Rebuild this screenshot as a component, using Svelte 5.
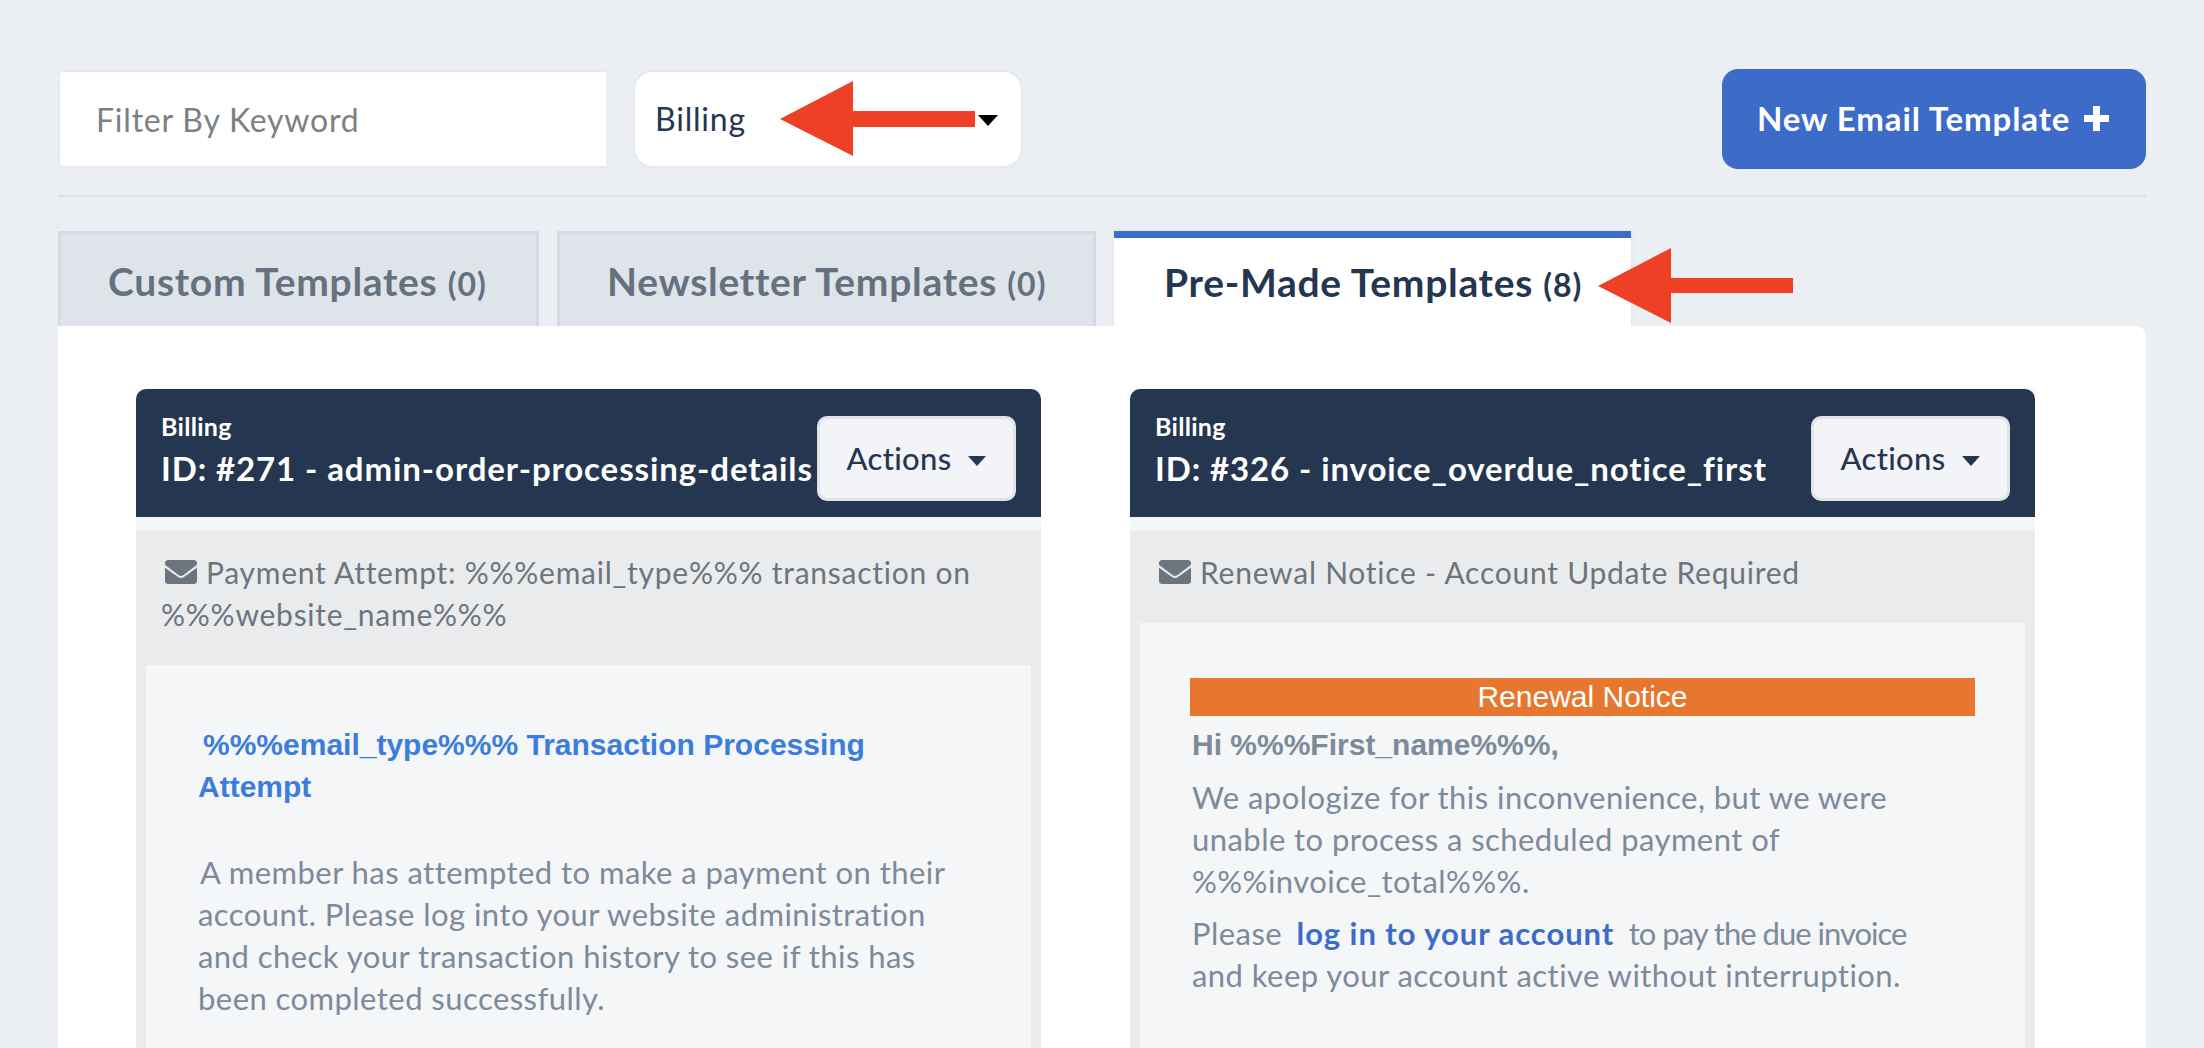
<script>
  const envelope = "M502.3 190.8c3.9-3.1 9.7-.2 9.7 4.7V400c0 26.5-21.5 48-48 48H48c-26.5 0-48-21.5-48-48V195.6c0-5 5.7-7.8 9.7-4.7 22.4 17.4 52.1 39.5 154.1 113.6 21.1 15.4 56.7 47.8 92.2 47.6 35.7.3 72-32.8 92.3-47.6 102-74.1 131.6-96.3 154-113.7zM256 320c23.2.4 56.6-29.2 73.4-41.4 132.7-96.3 142.8-104.7 173.4-128.7 5.8-4.5 9.2-11.5 9.2-18.9v-19c0-26.5-21.5-48-48-48H48C21.5 64 0 85.5 0 112v19c0 7.4 3.4 14.3 9.2 18.9 30.6 23.9 40.7 32.4 173.4 128.7 16.8 12.2 50.2 41.8 73.4 41.4z";
</script>

<div class="page">
  <div class="toolbar">
    <input class="filter" placeholder="Filter By Keyword" />
    <div class="select">Billing<span class="select-arrow"></span></div>
    <button class="new-btn">New Email Template <span class="plus"></span></button>
  </div>

  <div class="tabs">
    <div class="tab tab-one">Custom Templates <small>(0)</small></div>
    <div class="tab tab-two">Newsletter Templates <small>(0)</small></div>
    <div class="tab active">Pre-Made Templates <small>(8)</small></div>
  </div>

  <div class="panel">
    <div class="card">
      <div class="card-head">
        <div class="titles">
          <div class="cat">Billing</div>
          <div class="name">ID: #271 - admin-order-processing-details</div>
        </div>
        <button class="actions">Actions<span class="caret"></span></button>
      </div>
      <div class="card-body">
        <div class="subject">
          <svg viewBox="0 0 512 512"><path d={envelope} /></svg>Payment Attempt: %%%email_type%%% transaction on<br />%%%website_name%%%
        </div>
        <div class="mail">
          <h3 class="mail-title"><span class="indent"></span>%%%email_type%%% Transaction Processing<br />Attempt</h3>
          <p class="para-first"><span class="indent-small"></span>A member has attempted to make a payment on their<br />account. Please log into your website administration<br />and check your transaction history to see if this has<br />been completed successfully.</p>
        </div>
      </div>
    </div>

    <div class="card">
      <div class="card-head">
        <div class="titles">
          <div class="cat">Billing</div>
          <div class="name">ID: #326 - invoice_overdue_notice_first</div>
        </div>
        <button class="actions">Actions<span class="caret"></span></button>
      </div>
      <div class="card-body">
        <div class="subject one-line">
          <svg viewBox="0 0 512 512"><path d={envelope} /></svg>Renewal Notice - Account Update Required
        </div>
        <div class="mail mail-notice">
          <div class="banner">Renewal Notice</div>
          <div class="hi">Hi %%%First_name%%%,</div>
          <p class="para">We apologize for this inconvenience, but we were<br />unable to process a scheduled payment of<br />%%%invoice_total%%%.</p>
          <p class="para para-last">Please <a href="#top">log in to your account</a> <span class="tight">to pay the due invoice</span><br />and keep your account active without interruption.</p>
        </div>
      </div>
    </div>
  </div>

  <svg class="arrow arrow-one" viewBox="0 0 195 75"><path d="M0 38 73 0V30H195V46H73V75Z" /></svg>
  <svg class="arrow arrow-two" viewBox="0 0 195 75"><path d="M0 38 73 0V30H195V45H73V75Z" /></svg>
</div>

<style>
  :global(body) {
    margin: 0;
    background: #ebeef3;
  }
  .page {
    position: relative;
    height: 1048px;
    overflow: hidden;
    padding: 69px 58px 0;
    box-sizing: border-box;
    font-family: Lato, "Noto Sans", sans-serif;
    font-size: 30px;
    color: #253650;
  }
  .toolbar {
    display: flex;
    align-items: center;
    height: 100px;
    padding-bottom: 26px;
    border-bottom: 2px solid #dcdfe3;
    font-size: 32px;
    letter-spacing: 0.8px;
  }
  .filter {
    width: 548px;
    height: 98px;
    box-sizing: border-box;
    padding: 0 36px;
    border: 2px solid #e6e8ec;
    border-right: none;
    border-radius: 6px 0 0 6px;
    background: #fff;
    font: inherit;
    letter-spacing: inherit;
    outline: none;
  }
  .filter::placeholder {
    color: #7c7f83;
    opacity: 1;
  }
  .select {
    position: relative;
    width: 390px;
    height: 98px;
    margin-left: 27px;
    box-sizing: border-box;
    padding-left: 20px;
    border: 2px solid #e6e8ec;
    border-radius: 20px;
    background: #fff;
    line-height: 94px;
  }
  .select-arrow {
    position: absolute;
    right: 23px;
    top: 43px;
    border-left: 10px solid transparent;
    border-right: 10px solid transparent;
    border-top: 11px solid #000;
  }
  .new-btn {
    display: flex;
    align-items: center;
    gap: 14px;
    width: 424px;
    height: 100px;
    margin-left: auto;
    padding: 0 0 2px 35px;
    border: none;
    border-radius: 16px;
    background: #3c6bc8;
    color: #fff;
    font: inherit;
    font-size: 33px;
    font-weight: 700;
    letter-spacing: 0.9px;
  }
  .plus {
    position: relative;
    width: 25px;
    height: 25px;
    background:
      linear-gradient(#fff, #fff) center / 100% 7px no-repeat,
      linear-gradient(#fff, #fff) center / 7px 100% no-repeat;
    border-radius: 3px;
  }
  .tabs {
    display: flex;
    gap: 18px;
    margin-top: 34px;
    height: 95px;
  }
  .tab {
    box-sizing: border-box;
    height: 95px;
    padding-left: 47px;
    border: 3px solid #d3dbe6;
    border-bottom: none;
    background: #dfe4eb;
    color: #667180;
    font-size: 39px;
    font-weight: 700;
    letter-spacing: 0.7px;
    line-height: 94px;
    white-space: nowrap;
  }
  .tab small {
    font-size: 32px;
    letter-spacing: 1px;
  }
  .tab-one {
    width: 481px;
  }
  .tab-two {
    width: 539px;
  }
  .active {
    width: 517px;
    padding-left: 50px;
    border: none;
    border-top: 7px solid #3c6bc8;
    background: #fff;
    color: #253650;
    line-height: 88px;
    box-shadow: 0 0 4px rgba(0, 0, 0, 0.08);
  }
  .panel {
    position: relative;
    display: grid;
    grid-template-columns: minmax(0, 1fr) minmax(0, 1fr);
    gap: 89px;
    align-items: start;
    height: 800px;
    padding: 63px 111px 0 78px;
    border-radius: 0 10px 0 0;
    background: #fff;
  }
  .card {
    background: #f5f6f8;
  }
  .card-head {
    display: flex;
    align-items: center;
    justify-content: space-between;
    height: 128px;
    padding: 0 25px;
    border-radius: 10px 10px 0 0;
    background: #253650;
    color: #fff;
  }
  .titles {
    min-width: 0;
    margin-top: -4px;
  }
  .cat {
    font-size: 25px;
    font-weight: 700;
    letter-spacing: 0.3px;
    line-height: 34px;
  }
  .name {
    font-size: 33px;
    font-weight: 700;
    letter-spacing: 0.9px;
    line-height: 50px;
    white-space: nowrap;
  }
  .actions {
    flex: none;
    width: 199px;
    height: 85px;
    margin-top: 11px;
    box-sizing: border-box;
    padding: 0 0 2px;
    border: 3px solid #e1e3e8;
    border-radius: 10px;
    background: #f3f4f8;
    color: #253650;
    font: inherit;
    font-size: 31px;
    font-weight: 500;
    letter-spacing: 0.3px;
  }
  .caret {
    display: inline-block;
    margin-left: 17px;
    vertical-align: 4px;
    border-left: 9px solid transparent;
    border-right: 9px solid transparent;
    border-top: 10px solid #253650;
  }
  .card-body {
    margin-top: 14px;
    background: #eaebed;
  }
  .subject {
    box-sizing: border-box;
    height: 134px;
    padding: 20px 25px 0;
    color: #6c757d;
    letter-spacing: 0.75px;
    line-height: 42px;
  }
  .subject svg {
    width: 32px;
    height: 32px;
    margin: 0 9px 0 4px;
    vertical-align: -4px;
    fill: #6c757d;
  }
  .one-line {
    height: 92px;
  }
  .mail {
    height: 500px;
    margin: 0 10px;
    padding: 59px 52px 0;
    background: #f4f6f8;
    color: #7d8a9b;
    font-size: 31px;
    letter-spacing: 0.45px;
    line-height: 42px;
  }
  .mail-title {
    margin: 0;
    color: #3b7ddd;
    font: 700 30px/42px "Liberation Sans", Arial, sans-serif;
    letter-spacing: 0;
  }
  .indent {
    display: inline-block;
    width: 5px;
  }
  .indent-small {
    display: inline-block;
    width: 2px;
  }
  .mail p {
    margin: 0;
  }
  .para-first {
    margin-top: 43px !important;
  }
  .mail-notice {
    padding: 55px 50px 0;
  }
  .banner {
    height: 38px;
    background: #e7772e;
    color: #fff;
    text-align: center;
    letter-spacing: 0;
    font: 30px/38px "Liberation Sans", Arial, sans-serif;
  }
  .hi {
    margin: 8px 0 10px 2px;
    letter-spacing: 0;
    font: 700 30px/42px "Liberation Sans", Arial, sans-serif;
  }
  .para {
    margin-left: 2px !important;
  }
  .para-last {
    margin-top: 10px !important;
  }
  .para a {
    margin: 0 6px;
    color: #3c6bc8;
    font-weight: 700;
    letter-spacing: 0.95px;
    text-decoration: none;
  }
  .tight {
    letter-spacing: -1px;
  }
  .arrow {
    position: absolute;
    width: 195px;
    height: 75px;
    fill: #ed4024;
  }
  .arrow-one {
    left: 780px;
    top: 81px;
  }
  .arrow-two {
    left: 1598px;
    top: 248px;
  }
</style>
